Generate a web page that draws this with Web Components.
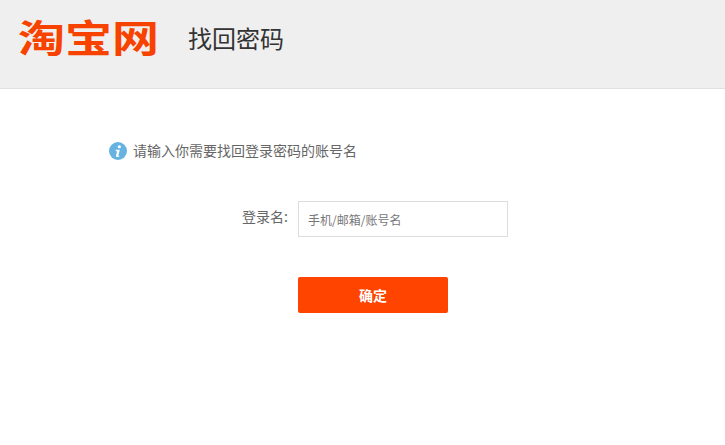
<!DOCTYPE html>
<html lang="zh">
<head>
<meta charset="utf-8">
<title>找回密码</title>
<style>
html, body { margin: 0; padding: 0; background: #fff; }
body { font-family: "Noto Sans CJK SC", "Liberation Sans", sans-serif; }
</style>
</head>
<body>
<page-header heading="找回密码"></page-header>
<main-form>
  <info-tip>请输入你需要找回登录密码的账号名</info-tip>
  <form-row label="登录名:"><text-box placeholder="手机/邮箱/账号名"></text-box></form-row>
  <submit-button>确定</submit-button>
</main-form>
<script>
const headerTpl = document.createElement("template");
headerTpl.innerHTML = `
<style>
:host { display: flex; align-items: flex-start; height: 88px; background: #efefef; border-bottom: 1px solid #e0e0e0; }
.logo { margin: 11px 0 0 18px; width: 141px; font: 700 47px/50px "Noto Sans CJK SC", sans-serif; color: #f74200; white-space: nowrap; transform: scaleY(.8); transform-origin: 0 50%; }
h1 { margin: 21px 0 0 29px; font: 400 24px/34px "Noto Sans CJK SC", sans-serif; color: #333; }
</style>
<div class="logo">淘宝网</div>
<h1></h1>`;
class PageHeader extends HTMLElement {
  constructor() {
    super();
    this.attachShadow({ mode: "open" }).appendChild(headerTpl.content.cloneNode(true));
    this.shadowRoot.querySelector("h1").textContent = this.getAttribute("heading");
  }
}
customElements.define("page-header", PageHeader);

const formTpl = document.createElement("template");
formTpl.innerHTML = `
<style>
:host { display: flex; flex-direction: column; padding: 52px 0 0 109px; }
</style>
<slot></slot>`;
class MainForm extends HTMLElement {
  constructor() {
    super();
    this.attachShadow({ mode: "open" }).appendChild(formTpl.content.cloneNode(true));
  }
}
customElements.define("main-form", MainForm);

const tipTpl = document.createElement("template");
tipTpl.innerHTML = `
<style>
:host { display: flex; align-items: center; gap: 6px; height: 20px; font: 14px/20px "Noto Sans CJK SC", sans-serif; color: #666; }
svg { width: 18px; height: 18px; flex: none; }
span { position: relative; top: -1px; }
</style>
<svg viewBox="0 0 19 19"><circle cx="9.5" cy="9.5" r="9.5" fill="#66b3e2"/><circle cx="10.9" cy="5" r="1.7" fill="#fff"/><path d="M7.4 8.3h4l-1.5 6c-.1.5.3.6 1.3.2l-.2.9c-1.500.7-4 .9-3.500-1.200l1-4.500-1.700-.3z" fill="#fff"/></svg>
<span><slot></slot></span>`;
class InfoTip extends HTMLElement {
  constructor() {
    super();
    this.attachShadow({ mode: "open" }).appendChild(tipTpl.content.cloneNode(true));
  }
}
customElements.define("info-tip", InfoTip);

const rowTpl = document.createElement("template");
rowTpl.innerHTML = `
<style>
:host { display: flex; align-items: flex-start; margin-top: 40px; }
label { width: 189px; padding-right: 10px; box-sizing: border-box; text-align: right; font: 14px/30px "Noto Sans CJK SC", sans-serif; color: #666; }
</style>
<label></label><slot></slot>`;
class FormRow extends HTMLElement {
  constructor() {
    super();
    this.attachShadow({ mode: "open" }).appendChild(rowTpl.content.cloneNode(true));
    this.shadowRoot.querySelector("label").textContent = this.getAttribute("label");
  }
}
customElements.define("form-row", FormRow);

const boxTpl = document.createElement("template");
boxTpl.innerHTML = `
<style>
:host { display: block; }
input { display: block; box-sizing: border-box; width: 210px; height: 36px; margin: 0; padding: 0 9px; border: 1px solid #ddd; border-radius: 0; outline: 0; background: #fff; font: 12px "Noto Sans CJK SC", sans-serif; color: #333; }
input::placeholder { color: #777; opacity: 1; }
</style>
<input type="text">`;
class TextBox extends HTMLElement {
  constructor() {
    super();
    this.attachShadow({ mode: "open" }).appendChild(boxTpl.content.cloneNode(true));
    this.shadowRoot.querySelector("input").placeholder = this.getAttribute("placeholder");
  }
}
customElements.define("text-box", TextBox);

const btnTpl = document.createElement("template");
btnTpl.innerHTML = `
<style>
:host { display: block; margin: 40px 0 0 189px; width: 150px; }
button { display: block; width: 150px; height: 36px; padding: 0; border: 0; border-radius: 2px; background: #ff4400; color: #fff; font: 700 14px "Noto Sans CJK SC", sans-serif; }
</style>
<button type="button"><slot></slot></button>`;
class SubmitButton extends HTMLElement {
  constructor() {
    super();
    this.attachShadow({ mode: "open" }).appendChild(btnTpl.content.cloneNode(true));
  }
}
customElements.define("submit-button", SubmitButton);
</script>
</body>
</html>
